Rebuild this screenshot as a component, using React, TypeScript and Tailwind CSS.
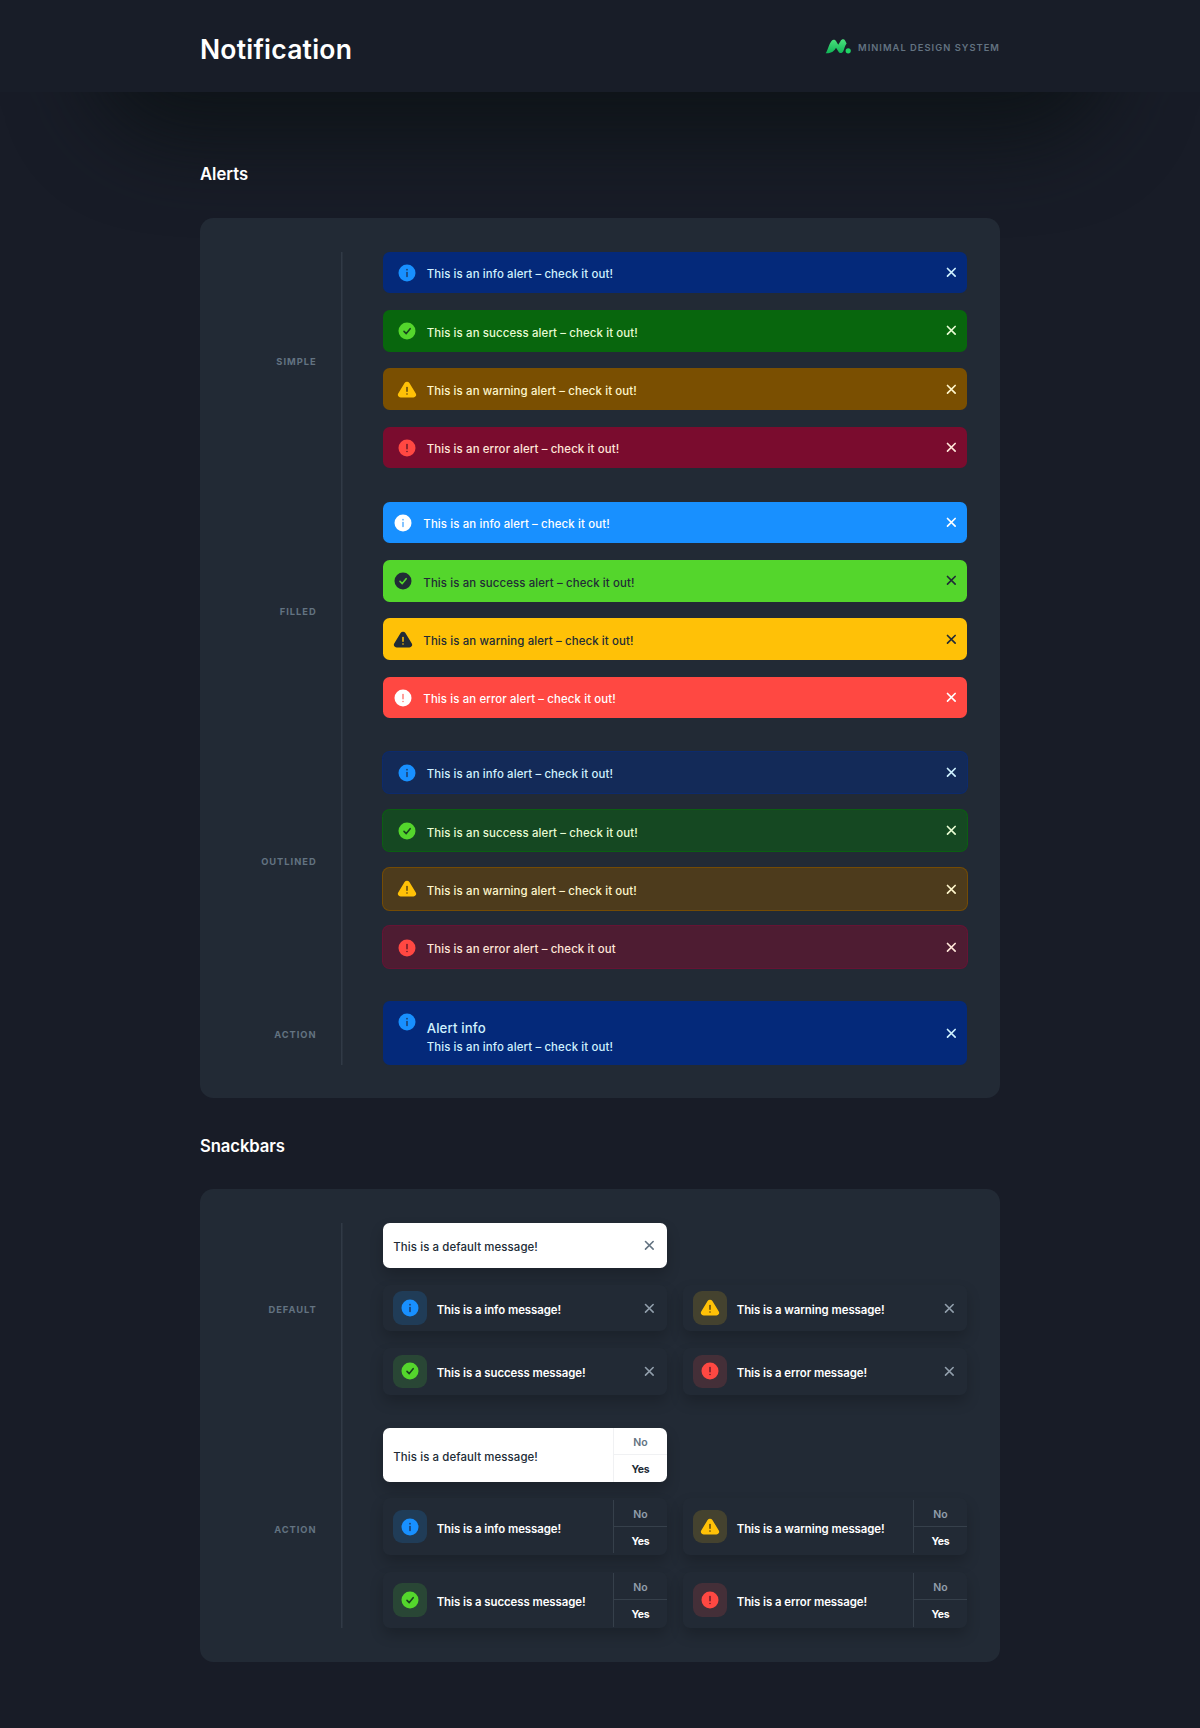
import type { ReactNode } from 'react';

type Kind = 'info' | 'success' | 'warning' | 'error';

const iconColor: Record<Kind, string> = {
  info: 'text-[#1890ff]',
  success: 'text-[#54d62c]',
  warning: 'text-[#ffc107]',
  error: 'text-[#ff4842]',
};

const markColor: Record<Kind, string> = {
  info: '#1c3a66',
  success: '#17431d',
  warning: '#5b4310',
  error: '#6d1a28',
};

function StatusIcon({ kind, className = '', mark }: { kind: Kind; className?: string; mark?: string }) {
  const m = mark ?? markColor[kind];
  return (
    <svg viewBox="0 0 24 24" className={`size-5 shrink-0 ${className}`} fill="none">
      {kind === 'warning' ? (
        <path
          d="M22.56 16.3 14.89 3.58a3.43 3.43 0 0 0-5.78 0L1.44 16.3a3 3 0 0 0-.05 3A3.37 3.37 0 0 0 4.33 21h15.34a3.37 3.37 0 0 0 2.94-1.66 3 3 0 0 0-.05-3.04Z"
          fill="currentColor"
        />
      ) : (
        <circle cx="12" cy="12" r="10.2" fill="currentColor" />
      )}
      {kind === 'info' && (
        <g fill={m}>
          <circle cx="12" cy="8" r="1" />
          <rect x="11.1" y="10.4" width="1.8" height="6.6" rx="0.9" />
        </g>
      )}
      {kind === 'success' && (
        <path d="m8.4 12.4 2.7 2.7 4.7-5.9" stroke={m} strokeWidth="1.9" strokeLinecap="round" strokeLinejoin="round" />
      )}
      {kind === 'error' && (
        <g fill={m}>
          <rect x="11.1" y="7" width="1.8" height="6.8" rx="0.9" />
          <circle cx="12" cy="16.2" r="1" />
        </g>
      )}
      {kind === 'warning' && (
        <g fill={m}>
          <rect x="11.1" y="8" width="1.8" height="6.4" rx="0.9" />
          <circle cx="12" cy="16.8" r="1" />
        </g>
      )}
    </svg>
  );
}

function Close({ className }: { className: string }) {
  return (
    <svg viewBox="0 0 20 20" className={`size-[16.67px] shrink-0 ${className}`} fill="none" stroke="currentColor" strokeLinecap="round">
      <path d="m5.4 5.4 9.2 9.2M14.6 5.4l-9.2 9.2" />
    </svg>
  );
}

type AlertProps = { kind: Kind; box: string; text: string; mark?: string; icon?: string; filled?: boolean; message?: string };

const messages: Record<Kind, string> = {
  info: 'This is an info alert – check it out!',
  success: 'This is an success alert – check it out!',
  warning: 'This is an warning alert – check it out!',
  error: 'This is an error alert – check it out!',
};

function Alert({ kind, box, text, mark, icon, filled, message }: AlertProps) {
  return (
    <div className={`flex h-[41.67px] items-center gap-2.5 rounded-[6.67px] pr-[6.9px] ${filled ? 'pl-2.5' : 'pl-[13.33px]'} ${box} ${text}`}>
      <StatusIcon kind={kind} className={`mt-px ${icon ?? iconColor[kind]}`} mark={mark} />
      <span className="flex-1 pt-[4px] text-[11.4px] font-medium leading-4 tracking-[0.13px]">{message ?? messages[kind]}</span>
      <Close className="stroke-2" />
    </div>
  );
}

const simple: AlertProps[] = [
  { kind: 'info', box: 'bg-[#04297a]', text: 'text-[#d0f2ff]' },
  { kind: 'success', box: 'bg-[#08660d]', text: 'text-[#e9fcd4]' },
  { kind: 'warning', box: 'bg-[#7a4f01]', text: 'text-[#fff7cd]' },
  { kind: 'error', box: 'bg-[#7a0c2e]', text: 'text-[#ffe7d9]' },
];

const filledAlerts: AlertProps[] = [
  { kind: 'info', box: 'bg-[#1890ff]', text: 'text-white', icon: 'text-white', mark: '#5cb0ff', filled: true },
  { kind: 'success', box: 'bg-[#54d62c]', text: 'text-[#212b36]', icon: 'text-[#212b36]', mark: '#54d62c', filled: true },
  { kind: 'warning', box: 'bg-[#ffc107]', text: 'text-[#212b36]', icon: 'text-[#212b36]', mark: '#ffc107', filled: true },
  { kind: 'error', box: 'bg-[#ff4842]', text: 'text-white', icon: 'text-white', mark: '#ff7f7a', filled: true },
];

const outlined: AlertProps[] = [
  { kind: 'info', box: 'bg-[#132a58] ring-1 ring-[#0c2a6c]', text: 'text-[#d0f2ff]' },
  { kind: 'success', box: 'bg-[#154822] ring-1 ring-[#0b5e12]', text: 'text-[#e9fcd4]' },
  { kind: 'warning', box: 'bg-[#4d3b1c] ring-1 ring-[#744b04]', text: 'text-[#fff7cd]' },
  { kind: 'error', box: 'bg-[#4e1c32] ring-1 ring-[#661334]', text: 'text-[#ffe7d9]', message: 'This is an error alert – check it out' },
];

const tile: Record<Kind, string> = {
  info: 'bg-[#203c57]',
  success: 'bg-[#294635]',
  warning: 'bg-[#44422f]',
  error: 'bg-[#442f38]',
};

const cardShadow = 'shadow-[0_7px_14px_rgba(0,0,0,0.2)]';

function Snackbar({ kind, action }: { kind?: Kind; action?: boolean }) {
  const light = !kind;
  const height = action ? (light ? 'h-[53.67px]' : 'h-[56.67px]') : light ? 'h-[45.33px]' : 'h-[46.67px]';
  return (
    <div className={`flex w-[283.33px] items-center overflow-hidden rounded-[6.67px] pl-2.5 ${height} ${cardShadow} ${light ? 'bg-white text-[#212b36]' : 'bg-[#222a35] text-white'}`}>
      {kind && (
        <div className={`mr-2.5 flex size-[33.33px] shrink-0 items-center justify-center rounded-[9px] ${tile[kind]}`}>
          <StatusIcon kind={kind} className={iconColor[kind]} />
        </div>
      )}
      <span className={`flex-1 pt-[4px] text-[11.4px] leading-4 ${light ? 'font-medium tracking-[0.11px]' : 'font-semibold tracking-[-0.05px]'}`}>
        {kind ? `This is a ${kind} message!` : 'This is a default message!'}
      </span>
      {action ? (
        <div className={`grid h-[53.33px] w-[53.33px] grid-rows-2 divide-y border-l text-center text-[10.5px] ${light ? 'divide-[#f0f1f3] border-[#f0f1f3]' : 'divide-[#36404b] border-[#36404b]'}`}>
          <span className={`pt-[7px] font-semibold leading-4 ${light ? 'text-[#637381]' : 'text-[#919eab]'}`}>No</span>
          <span className="pt-[7px] font-bold leading-4 tracking-[-0.2px]">Yes</span>
        </div>
      ) : (
        <Close className={`mr-[9.3px] stroke-[1.9px] ${light ? 'text-[#637381]' : 'text-[#919eab]'}`} />
      )}
    </div>
  );
}

function SnackGroup({ action }: { action?: boolean }) {
  return (
    <div className="flex flex-col gap-[16.67px]">
      <Snackbar action={action} />
      <div className="grid grid-cols-2 gap-[16.67px]">
        <Snackbar kind="info" action={action} />
        <Snackbar kind="warning" action={action} />
        <Snackbar kind="success" action={action} />
        <Snackbar kind="error" action={action} />
      </div>
    </div>
  );
}

function Row({ label, children }: { label: string; children: ReactNode }) {
  return (
    <div className="flex items-center">
      <div className="w-[108.3px] pr-[25px] pt-[3.5px] text-right text-[9.3px] font-bold leading-3 tracking-[1px] text-[#637381]">
        {label}
      </div>
      <div className="ml-[41.7px] w-[583.4px]">{children}</div>
    </div>
  );
}

function Panel({ children }: { children: ReactNode }) {
  return (
    <section className="flex rounded-[13.33px] bg-[#222a35] py-[33.33px] pl-[33.33px]">
      <div className="flex flex-col gap-[33.33px] bg-[linear-gradient(#313a46,#313a46)] bg-[length:1.5px_100%] bg-[position:108px_0] bg-no-repeat">
        {children}
      </div>
    </section>
  );
}

function AlertList({ items }: { items: AlertProps[] }) {
  return (
    <div className="flex flex-col gap-[16.67px]">
      {items.map((a) => (
        <Alert key={a.kind} {...a} />
      ))}
    </div>
  );
}

function Logo() {
  return (
    <svg viewBox="0 0 26 16" className="h-4 w-[26px]">
      <defs>
        <linearGradient id="leaf" x1="0" y1="0" x2="0" y2="1">
          <stop offset="0" stopColor="#4be07c" />
          <stop offset="1" stopColor="#0fb356" />
        </linearGradient>
      </defs>
      <path
        d="M.7 15.3C3 11.5 4.200 5.600 6.500 2.900c1.400-1.700 3.500-1.500 4.500.200l2.200 3.600 2.400-3.800c1.400-2 3.500-2 4.600-.200l1.400 2.700c-2 2.500-2.200 5.300-3.300 7.800-1 2.300-3.700 2.400-4.900.300L11 9.800c-1.900 3.300-4.200 5.800-10.300 5.500Z"
        fill="url(#leaf)"
      />
      <circle cx="23.2" cy="12.800" r="2.600" fill="#1fd565" />
    </svg>
  );
}

export default function App() {
  return (
    <div className="relative isolate min-h-[1728px] overflow-hidden bg-[#181c27] font-['Inter',sans-serif] text-white">
      <div className="absolute inset-x-[90px] -top-[100px] -z-10 h-[240px] rounded-b-[90px] bg-[#0b1214]/80 blur-[42px]" />
      <header className="flex h-[92px] items-center justify-between bg-[#181d28] px-[200px]">
        <h1 className="pt-[6px] text-[26.5px] font-semibold leading-8 tracking-[0.22px]">Notification</h1>
        <div className="flex items-center gap-[7px]">
          <Logo />
          <span className="pt-[4px] text-[9.3px] font-semibold leading-3 tracking-[1.04px] text-[#637381]">MINIMAL DESIGN SYSTEM</span>
        </div>
      </header>
      <main className="mx-auto w-[800px]">
        <h2 className="h-[126.33px] pt-[70px] text-[16.67px] font-semibold leading-6">Alerts</h2>
        <Panel>
          <Row label="SIMPLE">
            <AlertList items={simple} />
          </Row>
          <Row label="FILLED">
            <AlertList items={filledAlerts} />
          </Row>
          <Row label="OUTLINED">
            <AlertList items={outlined} />
          </Row>
          <Row label="ACTION">
            <div className="flex h-[63.33px] gap-2.5 rounded-[6.67px] bg-[#04297a] pl-[13.33px] pr-[6.9px] text-[#d0f2ff]">
              <StatusIcon kind="info" className="mt-[11px] text-[#1890ff]" />
              <div className="flex-1 pt-[16.5px]">
                <div className="text-[13.2px] font-medium leading-5 tracking-[0.15px]">Alert info</div>
                <div className="pt-[1px] text-[11.4px] font-medium leading-4 tracking-[0.13px]">This is an info alert – check it out!</div>
              </div>
              <Close className="self-center stroke-2" />
            </div>
          </Row>
        </Panel>
        <h2 className="h-[91.33px] pt-[36px] text-[16.67px] font-semibold leading-6 tracking-[-0.1px]">Snackbars</h2>
        <Panel>
          <Row label="DEFAULT">
            <SnackGroup />
          </Row>
          <Row label="ACTION">
            <SnackGroup action />
          </Row>
        </Panel>
      </main>
    </div>
  );
}
